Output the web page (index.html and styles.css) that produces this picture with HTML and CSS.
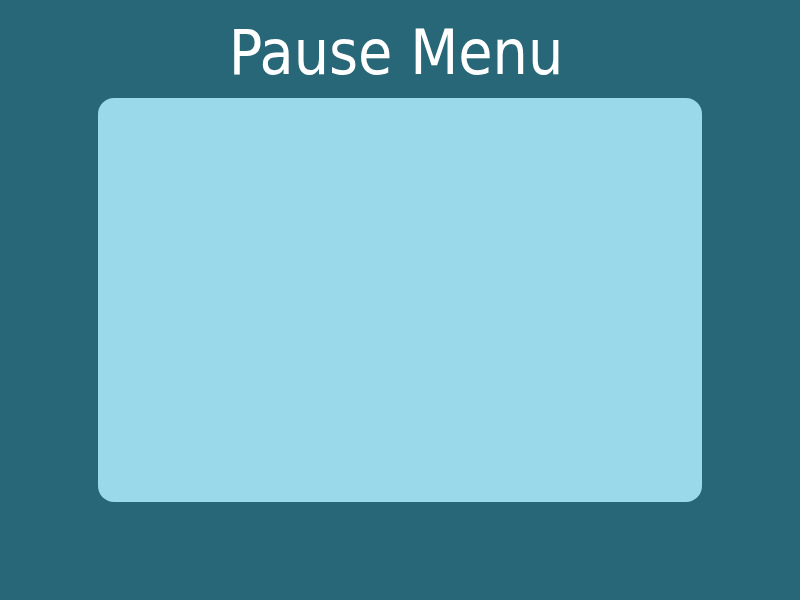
FILE: index.html
```html
<!DOCTYPE html>
<html>
<head>
<meta charset="utf-8">
<link rel="stylesheet" href="styles.css">
</head>
<body>
<div class="screen">
  <h1 class="title">Pause Menu</h1>
  <div class="panel"></div>
</div>
</body>
</html>
```
FILE: styles.css
```css
html, body {
  margin: 0;
  padding: 0;
  width: 800px;
  height: 600px;
  overflow: hidden;
  background: #286778;
}
.screen {
  display: flex;
  flex-direction: column;
  align-items: center;
  height: 600px;
}
.title {
  margin: 0 8px 0 0;
  height: 98px;
  line-height: 106px;
  font-family: "DejaVu Sans Condensed", "DejaVu Sans", sans-serif;
  font-weight: normal;
  font-size: 62px;
  color: #ffffff;
  white-space: nowrap;
}
.panel {
  width: 604px;
  height: 404px;
  background: #99d9ea;
  border-radius: 16px;
}
```
